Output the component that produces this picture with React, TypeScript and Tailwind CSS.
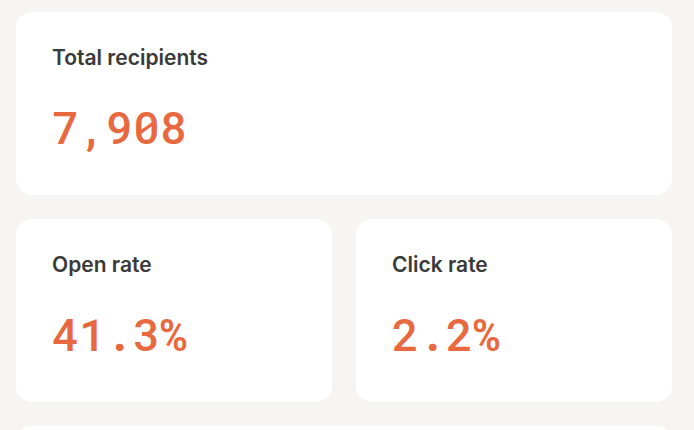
import React from "react";

function Card({ label, value }: { label: string; value: string }) {
  return (
    <div className="bg-white rounded-2xl pt-8 pb-[46px] px-9">
      <div
        className="text-[21px] leading-[28px] font-semibold text-[#3a3a3a]"
        style={{ fontFamily: "Inter, 'Noto Sans', sans-serif" }}
      >
        {label}
      </div>
      <div
        className="mt-[32px] text-[45px] leading-[45px] font-medium text-[#e8693f]"
        style={{ fontFamily: "'Roboto Mono', 'DejaVu Sans Mono', 'Liberation Mono', monospace" }}
      >
        {value}
      </div>
    </div>
  );
}

export default function App() {
  return (
    <div className="w-[694px] h-[430px] bg-[#f6f5f3] pt-3 pl-4 pr-[22px] flex flex-col gap-6 overflow-hidden">
      <Card label="Total recipients" value="7,908" />
      <div className="grid grid-cols-2 gap-6">
        <Card label="Open rate" value="41.3%" />
        <Card label="Click rate" value="2.2%" />
      </div>
      <div className="bg-white rounded-2xl h-[183px] shrink-0" />
    </div>
  );
}
